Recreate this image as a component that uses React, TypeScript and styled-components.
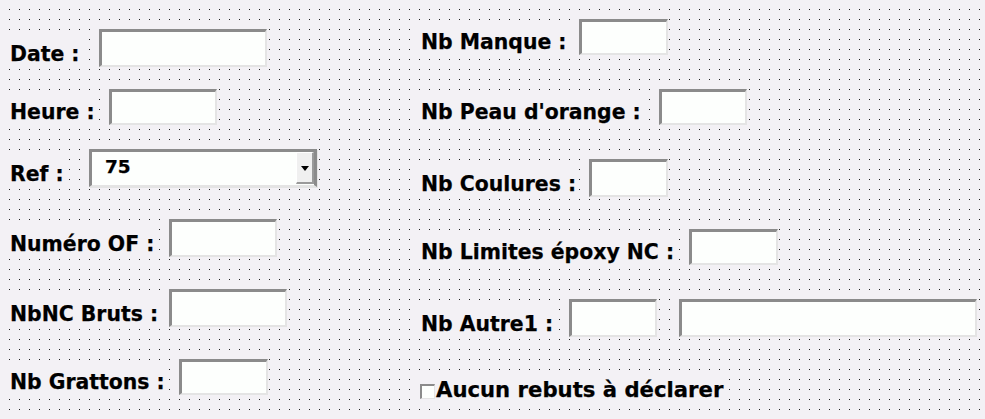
import React from "react";
import styled, { createGlobalStyle } from "styled-components";

const BG = "#f3f1f5";

const Global = createGlobalStyle`
  html, body { margin: 0; padding: 0; }
  body { background: ${BG}; font-family: "DejaVu Sans", Verdana, sans-serif; }
`;

const Page = styled.div`
  width: 985px;
  height: 419px;
  overflow: hidden;
  display: flex;
  background:
    linear-gradient(to right, ${BG} 9px, transparent 9px) 0 0 / 10px 10px,
    linear-gradient(to bottom, ${BG} 9px, transparent 9px) 0 0 / 10px 10px,
    #1e1e1e;
`;

const Column = styled.div<{ $width?: number; $top: number; $left: number }>`
  ${(p) => (p.$width ? `width: ${p.$width}px; flex: none;` : "flex: 1;")}
  box-sizing: border-box;
  padding: ${(p) => p.$top}px 0 0 ${(p) => p.$left}px;
  display: flex;
  flex-direction: column;
`;

const Row = styled.div<{ $gap: number }>`
  display: flex;
  align-items: flex-end;
  margin-top: ${(p) => p.$gap}px;
`;

const Label = styled.label<{ $w: number }>`
  box-sizing: border-box;
  width: ${(p) => p.$w}px;
  height: 28px;
  padding-left: 2px;
  font-family: "DejaVu Sans", Verdana, sans-serif;
  font-weight: bold;
  font-size: 20.4px;
  -webkit-text-stroke: 0.25px #000;
  color: #000;
  white-space: nowrap;
  display: flex;
  align-items: flex-end;
  flex: none;
`;

const LabelText = styled.span`
  background: ${BG};
  height: 28px;
  line-height: 26px;
  padding: 0 3px 0 2px;
  margin-left: -2px;
  box-sizing: border-box;
  display: flex;
  align-items: flex-end;
`;

const Field = styled.input<{ $w: number; $h?: number; $ml?: number }>`
  box-sizing: border-box;
  width: ${(p) => p.$w}px;
  height: ${(p) => p.$h ?? 38}px;
  margin: 0 0 0 ${(p) => p.$ml ?? 0}px;
  padding: 0 4px;
  background: #fdfffd;
  border-style: solid;
  border-width: 3px 2px 2px 3px;
  border-color: #8b8b8b #e4e4e4 #e4e4e4 #8b8b8b;
  outline: none;
  font-family: "DejaVu Sans", Verdana, sans-serif;
  font-size: 16px;
  flex: none;
`;

const Combo = styled.div<{ $w: number }>`
  box-sizing: border-box;
  width: ${(p) => p.$w}px;
  height: 38px;
  background: #fdfffd;
  border-style: solid;
  border-width: 3px 3px 2px 3px;
  border-color: #8b8b8b #8b8b8b #e4e4e4 #8b8b8b;
  box-shadow: 1px 1px 0 #e4e4e4;
  display: flex;
  align-items: stretch;
  flex: none;
`;

const ComboValue = styled.span`
  flex: 1;
  padding-left: 13px;
  font-family: "DejaVu Sans", Verdana, sans-serif;
  font-weight: bold;
  font-size: 18.5px;
  -webkit-text-stroke: 0.25px #000;
  line-height: 30px;
  color: #000;
`;

const ComboButton = styled.div`
  box-sizing: border-box;
  width: 18px;
  margin: 0 0 1px 0;
  background: #f0f0f0;
  border-style: solid;
  border-width: 1px 2px 2px 1px;
  border-color: #ffffff #9a9a9a #9a9a9a #ffffff;
  display: flex;
  align-items: center;
  justify-content: center;
`;

const Arrow = styled.span`
  width: 0;
  height: 0;
  border-left: 4.5px solid transparent;
  border-right: 4.5px solid transparent;
  border-top: 5px solid #000;
  margin-top: 1px;
`;

const CheckRow = styled.label`
  display: flex;
  align-items: center;
  margin-top: 40px;
  height: 26px;
  background: ${BG};
  align-self: flex-start;
  padding: 0 4px 0 1px;
  font-family: "DejaVu Sans", Verdana, sans-serif;
  font-weight: bold;
  font-size: 21.2px;
  -webkit-text-stroke: 0.25px #000;
  line-height: 26px;
  white-space: nowrap;
  color: #000;
`;

const Box = styled.span`
  box-sizing: border-box;
  width: 15px;
  height: 15px;
  margin: 2px 1px 0 0;
  background: #fdfffd;
  border-style: solid;
  border-width: 2px 1px 1px 2px;
  border-color: #8b8b8b #e4e4e4 #e4e4e4 #8b8b8b;
  flex: none;
`;

type FieldRow = { label: string; lw: number; iw: number; ih?: number; gap: number };

const leftRows: FieldRow[] = [
  { label: "Date :", lw: 91, iw: 168, gap: 0 },
  { label: "Heure :", lw: 101, iw: 108, ih: 36, gap: 22 },
];

const leftRows2: FieldRow[] = [
  { label: "Numéro OF :", lw: 161, iw: 108, gap: 32 },
  { label: "NbNC Bruts :", lw: 161, iw: 118, gap: 32 },
  { label: "Nb Grattons :", lw: 171, iw: 89, ih: 36, gap: 32 },
];

const rightRows: FieldRow[] = [
  { label: "Nb Manque :", lw: 160, iw: 89, ih: 36, gap: 0 },
  { label: "Nb Peau d'orange :", lw: 240, iw: 88, ih: 36, gap: 34 },
  { label: "Nb Coulures :", lw: 170, iw: 79, gap: 34 },
  { label: "Nb Limites époxy NC :", lw: 270, iw: 89, ih: 36, gap: 32 },
];

const renderRow = (r: FieldRow) => (
  <Row key={r.label} $gap={r.gap}>
    <Label $w={r.lw}>
      <LabelText>{r.label}</LabelText>
    </Label>
    <Field $w={r.iw} $h={r.ih} />
  </Row>
);

export default function App() {
  return (
    <>
      <Global />
      <Page>
        <Column $width={419} $top={29} $left={8}>
          {leftRows.map(renderRow)}
          <Row $gap={24}>
            <Label $w={81}>
              <LabelText>Ref :</LabelText>
            </Label>
            <Combo $w={228}>
              <ComboValue>75</ComboValue>
              <ComboButton>
                <Arrow />
              </ComboButton>
            </Combo>
          </Row>
          {leftRows2.map(renderRow)}
        </Column>
        <Column $top={19} $left={0}>
          {rightRows.map(renderRow)}
          <Row $gap={34}>
            <Label $w={150}>
              <LabelText>Nb Autre1 :</LabelText>
            </Label>
            <Field $w={88} />
            <Field $w={298} $ml={22} />
          </Row>
          <CheckRow>
            <Box />
            Aucun rebuts à déclarer
          </CheckRow>
        </Column>
      </Page>
    </>
  );
}
